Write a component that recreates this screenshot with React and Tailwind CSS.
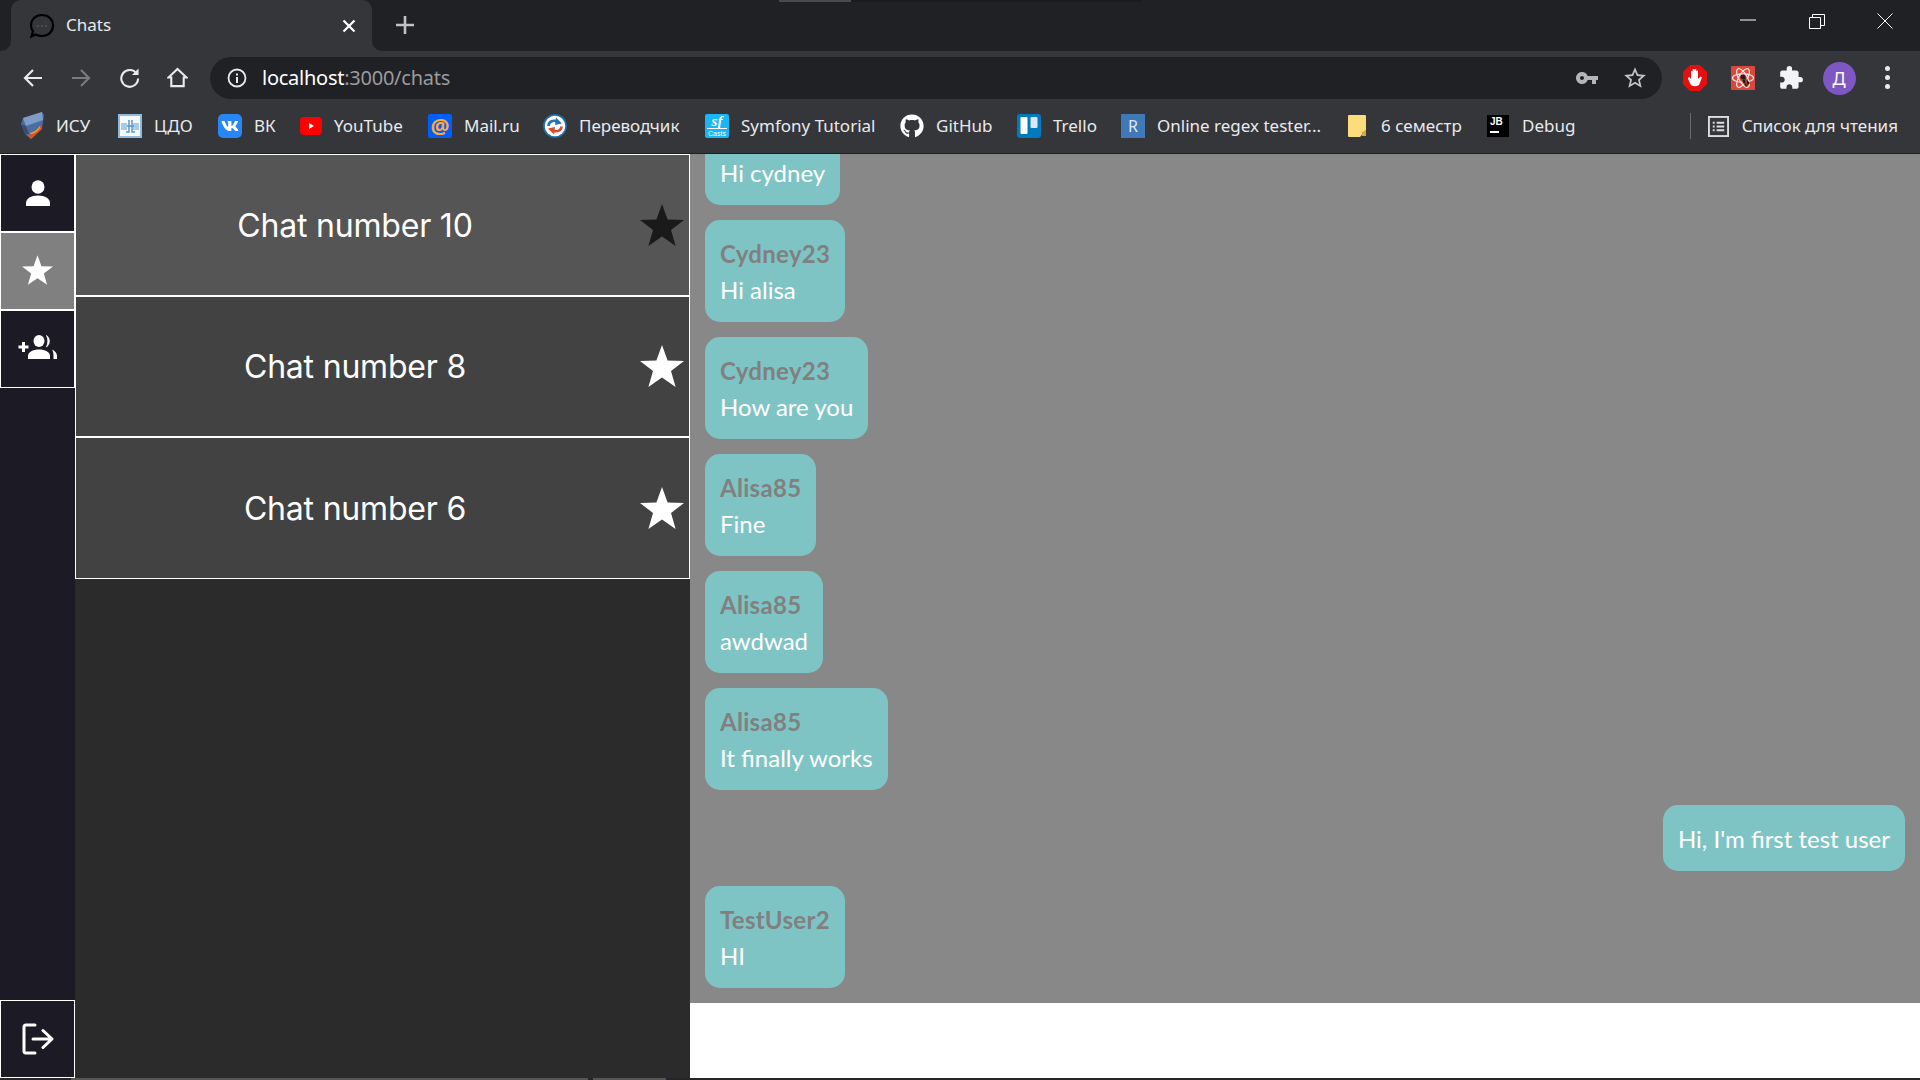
import React from "react";
import { FaGithub, FaVk } from "react-icons/fa";
import { MdVpnKey, MdStarBorder, MdExtension } from "react-icons/md";

const ui = "font-['Noto_Sans',sans-serif]";

const Star = ({ className }) => (
  <svg viewBox="0 0 44 42" className={className}>
    <polygon points="22,0 27.6,15.6 44,16 31,26 35.6,42 22,32.6 8.4,42 13,26 0,16 16.4,15.6" fill="currentColor" />
  </svg>
);

const IsuIcon = () => (
  <svg viewBox="0 0 24 28" className="w-6 h-7">
    <polygon points="3,6 22,0 24,3 22,17 11,27 5,22 1,12" fill="#4a6da3" />
    <polygon points="3,6 22,0 23,8 6,14" fill="#7f9cc8" />
    <polygon points="1,12 6,14 9,22 5,22" fill="#3d4c6e" />
    <path d="M7 23 C12 23 17 20 21 13 L22 17 L11 27 Z" fill="#e0501c" />
    <path d="M10 21 C14 20 17 18 20 14 L20 16 C17 20 14 22 10 22 Z" fill="#f5a02c" />
  </svg>
);
const CdoIcon = () => (
  <svg viewBox="0 0 24 24" className="w-6 h-6">
    <rect x="1" y="1" width="22" height="22" fill="#f5f9fc" stroke="#8fbbdc" strokeWidth="2" />
    <rect x="3" y="9" width="6" height="7" fill="#a9cce6" />
    <rect x="15" y="9" width="6" height="7" fill="#a9cce6" />
    <path d="M11 6 V18 H8 M14 6 V18 H17 M9 12 H16" fill="none" stroke="#5c97c6" strokeWidth="1.500" />
  </svg>
);
const VkIcon = () => (
  <span className="w-6 h-6 rounded-[5px] bg-[#2787f5] flex items-center justify-center text-white"><FaVk size={18} /></span>
);
const YtIcon = () => (
  <svg viewBox="0 0 22 18" className="w-[22px] h-[18px]">
    <rect width="22" height="18" rx="4" fill="#f00" />
    <polygon points="9,6 14,9 9,12" fill="#fff" />
  </svg>
);
const MailIcon = () => (
  <span className={`w-6 h-6 rounded-[2px] bg-[#005ff9] flex items-center justify-center text-[#ffa930] text-[21px] leading-none font-bold ${ui}`}>@</span>
);
const TranslateIcon = () => (
  <svg viewBox="0 0 24 24" className="w-6 h-6">
    <circle cx="12" cy="12" r="12" fill="#1f6ca8" />
    <circle cx="12" cy="12" r="10.300" fill="#fff" />
    <path d="M5.500 12 C5.500 8 9.500 5.500 14.500 7.500" fill="none" stroke="#2c72ad" strokeWidth="2.600" />
    <polygon points="13,3.500 19,9.500 12,11" fill="#2c72ad" />
    <path d="M18.500 12.500 C18.500 16 14.500 18.500 9.500 16.500" fill="none" stroke="#dd4a2e" strokeWidth="2.600" />
    <polygon points="11,20.500 5,14.500 12,13" fill="#dd4a2e" />
  </svg>
);
const SymfonyIcon = () => (
  <span className="w-6 h-6 rounded-[2px] bg-[#1ab5f5] flex flex-col items-center text-white overflow-hidden">
    <span className="font-['Liberation_Serif',serif] italic font-bold text-[15px] leading-[14px]">sf</span>
    <span className="w-5 h-px bg-white" />
    <span className="font-['Liberation_Sans',sans-serif] text-[7px] leading-[9px]">Casts</span>
  </span>
);
const GithubIcon = () => <span className="text-white"><FaGithub size={24} /></span>;
const TrelloIcon = () => (
  <svg viewBox="0 0 24 24" className="w-6 h-6">
    <rect width="24" height="24" rx="3" fill="#0079bf" />
    <rect x="3.500" y="3" width="7" height="17" rx="1" fill="#fff" />
    <rect x="13.500" y="3" width="7" height="11" rx="1" fill="#d9e8f2" />
  </svg>
);
const RegexIcon = () => (
  <span className="w-6 h-6 bg-[#4078b8] flex items-center justify-center text-[#dbe7f5] text-[16px] font-['Noto_Sans',sans-serif] leading-none">R</span>
);
const FolderIcon = () => (
  <svg viewBox="0 0 18 22" className="w-[18px] h-[22px]">
    <path d="M1 0 H17 a1 1 0 0 1 1 1 V15 L12 22 H1 a1 1 0 0 1 -1 -1 V1 a1 1 0 0 1 1 -1 Z" fill="#fddc7c" />
    <path d="M18 15 V21 H14 V17 Z" fill="#d4a93f" />
  </svg>
);
const JbIcon = () => (
  <span className="w-[22px] h-[22px] bg-black flex flex-col px-[3px] text-white text-[10px] font-bold leading-[13px] font-['Liberation_Sans',sans-serif]">
    <span>JB</span>
    <span className="mt-[3px] w-[9px] h-[2px] bg-white" />
  </span>
);

const bookmarks = [
  { icon: <IsuIcon />, box: "w-6", gap: "ml-[12px]", label: "ИСУ", w: "w-[35px]", next: "mr-[27px]" },
  { icon: <CdoIcon />, box: "w-6", gap: "ml-[12px]", label: "ЦДО", w: "w-[38px]", next: "mr-[26px]" },
  { icon: <VkIcon />, box: "w-6", gap: "ml-[12px]", label: "ВК", w: "w-[20px]", next: "mr-[26px]" },
  { icon: <YtIcon />, box: "w-[22px]", gap: "ml-[12px]", label: "YouTube", w: "w-[68px]", next: "mr-[26px]" },
  { icon: <MailIcon />, box: "w-6", gap: "ml-[12px]", label: "Mail.ru", w: "w-[54px]", next: "mr-[25px]" },
  { icon: <TranslateIcon />, box: "w-6", gap: "ml-[12px]", label: "Переводчик", w: "w-[101px]", next: "mr-[25px]" },
  { icon: <SymfonyIcon />, box: "w-6", gap: "ml-[12px]", label: "Symfony Tutorial", w: "w-[133px]", next: "mr-[26px]" },
  { icon: <GithubIcon />, box: "w-6", gap: "ml-[12px]", label: "GitHub", w: "w-[56px]", next: "mr-[25px]" },
  { icon: <TrelloIcon />, box: "w-6", gap: "ml-[12px]", label: "Trello", w: "w-[43px]", next: "mr-[25px]" },
  { icon: <RegexIcon />, box: "w-6", gap: "ml-[12px]", label: "Online regex tester...", w: "w-[164px]", next: "mr-[27px]" },
  { icon: <FolderIcon />, box: "w-[18px]", gap: "ml-[15px]", label: "6 семестр", w: "w-[80px]", next: "mr-[26px]" },
  { icon: <JbIcon />, box: "w-[22px]", gap: "ml-[13px]", label: "Debug", w: "w-[53px]", next: "" },
];

const messages = [
  { text: "Hi cydney" },
  { name: "Cydney23", text: "Hi alisa" },
  { name: "Cydney23", text: "How are you" },
  { name: "Alisa85", text: "Fine" },
  { name: "Alisa85", text: "awdwad" },
  { name: "Alisa85", text: "It finally works" },
  { text: "Hi, I'm first test user", mine: true },
  { name: "TestUser2", text: "HI" },
];

const chats = [
  { title: "Chat number 10", bg: "bg-[#555555]", star: "text-[#1a1a1a]" },
  { title: "Chat number 8", bg: "bg-[#424242]", star: "text-white" },
  { title: "Chat number 6", bg: "bg-[#424242]", star: "text-white" },
];

const NavBtn = ({ children }) => (
  <span className="w-12 h-full flex items-center justify-center shrink-0">{children}</span>
);
const stroke = { fill: "none", stroke: "currentColor", strokeWidth: 2.2 };

const SideBtn = ({ active, className = "", children }) => (
  <button className={`w-[75px] h-[78px] border-[1.5px] border-white flex items-center justify-center text-white ${active ? "bg-[#808080]" : "bg-[#1c1a25]"} ${className}`}>
    {children}
  </button>
);

export default function App() {
  return (
    <div className={`w-screen h-screen overflow-hidden flex flex-col bg-[#35363a] ${ui}`}>
      {/* tab strip */}
      <div className="h-[51px] shrink-0 bg-[#202124] flex relative">
        <div className="absolute left-[779px] top-0 w-[72px] h-[2px] bg-[#4a4a4c]" />
        <div className="absolute left-[851px] top-0 w-[291px] h-[2px] bg-[#1b1b1d]" />
        <div className="ml-[11px] w-[361px] h-full bg-[#35363a] rounded-t-[10px] flex items-center relative">
          <span className="absolute -left-[11px] bottom-0 w-[11px] h-[11px] bg-[#35363a]">
            <span className="block w-full h-full bg-[#202124] rounded-br-[10px]" />
          </span>
          <span className="absolute -right-[11px] bottom-0 w-[11px] h-[11px] bg-[#35363a]">
            <span className="block w-full h-full bg-[#202124] rounded-bl-[10px]" />
          </span>
          <svg viewBox="0 0 26 26" className="ml-[18px] w-[26px] h-[26px] text-black">
            <path d="M13 2 C19.500 2 24 6.500 24 12.500 C24 18.500 19.500 23 13 23 C10.500 23 8.500 22.500 6.500 21.500 L2.500 23.500 L4 18.500 C2.800 16.800 2 14.800 2 12.500 C2 6.500 6.500 2 13 2 Z" {...stroke} />
            <circle cx="9" cy="13" r="1.100" fill="#555" />
            <circle cx="13" cy="13" r="1.100" fill="#555" />
            <circle cx="17" cy="13" r="1.100" fill="#555" />
          </svg>
          <span className="ml-[11px] text-[17px] leading-none text-[#e8eaed] -mt-[2px]">Chats</span>
          <svg viewBox="0 0 14 14" className="absolute left-[331px] top-[19px] w-[14px] h-[14px] text-white">
            <path d="M1.500 1.500 L12.500 12.500 M12.500 1.500 L1.500 12.500" fill="none" stroke="currentColor" strokeWidth="2.200" />
          </svg>
        </div>
        <svg viewBox="0 0 18 18" className="ml-[24px] mt-[16px] w-[18px] h-[18px] text-[#c0c2c5]">
          <path d="M9 0 V18 M0 9 H18" fill="none" stroke="currentColor" strokeWidth="2.600" />
        </svg>
        <div className="ml-auto flex h-full text-white">
          <svg viewBox="0 0 16 16" className="absolute left-[1740px] top-[12px] w-4 h-4"><path d="M0 8 H16" stroke="currentColor" strokeWidth="1" /></svg>
          <svg viewBox="0 0 16 16" className="absolute left-[1809px] top-[13px] w-4 h-4"><path d="M0.500 4.500 H11.500 V15.500 H0.500 Z M3.500 4.500 V1.500 H15.500 V12.500 H11.500" fill="none" stroke="currentColor" strokeWidth="1" /></svg>
          <svg viewBox="0 0 16 16" className="absolute left-[1877px] top-[13px] w-4 h-4"><path d="M0.500 0.500 L15.500 15.500 M15.500 0.500 L0.500 15.500" fill="none" stroke="currentColor" strokeWidth="1" /></svg>
        </div>
      </div>

      {/* toolbar */}
      <div className="h-[48px] shrink-0 flex items-center pl-[9px] pr-[9px] pt-[6px] text-[#e8eaed]">
        <NavBtn>
          <svg viewBox="0 0 20 20" className="w-5 h-5"><path d="M19 10 H2 M10 2 L2 10 L10 18" {...stroke} /></svg>
        </NavBtn>
        <NavBtn>
          <svg viewBox="0 0 20 20" className="w-5 h-5 text-[#7a7b7e]"><path d="M1 10 H18 M10 2 L18 10 L10 18" {...stroke} /></svg>
        </NavBtn>
        <NavBtn>
          <svg viewBox="0 0 22 22" className="w-[21px] h-[21px] -mt-[2px]"><path d="M18.500 7 A8.800 8.800 0 1 0 20 12" {...stroke} /><polygon points="20.500,1.500 20.500,8.500 13.500,8.500" fill="currentColor" /></svg>
        </NavBtn>
        <NavBtn>
          <svg viewBox="0 0 22 22" className="w-[21px] h-[21px] -mt-[1px]"><path d="M11 2 L20.500 11 H17.500 V20 H4.500 V11 H1.500 Z" {...stroke} /></svg>
        </NavBtn>
        <div className="ml-[9px] flex-1 h-[42px] rounded-full bg-[#202124] flex items-center relative">
          <svg viewBox="0 0 20 20" className="ml-[17px] w-5 h-5">
            <circle cx="10" cy="10" r="8.500" fill="none" stroke="currentColor" strokeWidth="1.800" />
            <rect x="9" y="9" width="2" height="6" fill="currentColor" />
            <rect x="9" y="5.500" width="2" height="2" fill="currentColor" />
          </svg>
          <span className="ml-[15px] text-[20px] leading-none tracking-[-0.25px] whitespace-nowrap">
            <span className="text-white">localhost</span><span className="text-[#9a9b9e]">:3000/chats</span>
          </span>
          <span className="absolute left-[1365px] top-[9px] text-[#b4b5b8]"><MdVpnKey size={24} /></span>
          <span className="absolute left-[1412px] top-[8px] text-[#c3c4c7]"><MdStarBorder size={26} /></span>
        </div>
        <div className="ml-[9px] flex h-full items-center">
          <NavBtn>
            <svg viewBox="0 0 24 26" className="w-6 h-[26px]">
              <polygon points="7,0 17,0 24,7 24,19 17,26 7,26 0,19 0,7" fill="#e60f0f" />
              <path d="M8 20 C6.500 17 5.500 15 4.800 13 L6.300 12 L8 14 V6.500 Q8.800 5.200 9.600 6.500 V11 V4.500 Q10.500 3.300 11.400 4.500 V11 V4.500 Q12.400 3.300 13.300 4.500 V11 V6 Q14.200 4.800 15 6 V14 L17.500 11.500 L19 12.500 C17.500 15.500 17 18 16 20 Q12 22.500 8 20 Z" fill="#fff" />
            </svg>
          </NavBtn>
          <NavBtn>
            <svg viewBox="0 0 24 24" className="w-6 h-6">
              <rect width="24" height="24" rx="1" fill="#d9483c" />
              <ellipse cx="12" cy="12" rx="10.500" ry="4.200" fill="none" stroke="#f5e0dc" strokeWidth="1.200" />
              <ellipse cx="12" cy="12" rx="10.500" ry="4.200" fill="none" stroke="#f5e0dc" strokeWidth="1.200" transform="rotate(60 12 12)" />
              <ellipse cx="12" cy="12" rx="10.500" ry="4.200" fill="none" stroke="#f5e0dc" strokeWidth="1.200" transform="rotate(120 12 12)" />
              <circle cx="12" cy="11" r="2.500" fill="#2a1c1c" />
              <path d="M14 12 L19 17 L15 21 L11 15 Z" fill="#2a1c1c" />
              <path d="M14 13 L16.500 20 M17 13 L13 19" stroke="#d9483c" strokeWidth="0.800" />
            </svg>
          </NavBtn>
          <NavBtn>
            <span className="text-[#f1f3f4]"><MdExtension size={26} /></span>
          </NavBtn>
          <NavBtn>
            <span className="w-[33px] h-[33px] rounded-full bg-[#7e57c2] flex items-center justify-center text-[18px] leading-none text-white">Д</span>
          </NavBtn>
          <NavBtn>
            <span className="flex flex-col gap-[4px] -mt-[1px]">
              <span className="w-[5px] h-[5px] rounded-full bg-[#e8eaed]" />
              <span className="w-[5px] h-[5px] rounded-full bg-[#e8eaed]" />
              <span className="w-[5px] h-[5px] rounded-full bg-[#e8eaed]" />
            </span>
          </NavBtn>
        </div>
      </div>

      {/* bookmarks */}
      <div className="h-[54px] shrink-0 flex items-center pl-[20px] pr-[22px] text-[17px] text-[#e8eaed] whitespace-nowrap">
        {bookmarks.map((b) => (
          <div key={b.label} className={`flex items-center shrink-0 ${b.next}`}>
            <span className={`flex items-center justify-center shrink-0 ${b.box}`}>{b.icon}</span>
            <span className={`${b.gap} block ${b.w}`}>{b.label}</span>
          </div>
        ))}
        <div className="ml-auto flex items-center">
          <span className="w-px h-[26px] bg-[#6a6b6e]" />
          <svg viewBox="0 0 22 22" className="ml-[17px] w-[21px] h-[21px]">
            <rect x="1" y="1" width="20" height="20" fill="none" stroke="#dadce0" strokeWidth="2" />
            <path d="M5 7 H7 M9 7 H17 M5 11 H7 M9 11 H17 M5 15 H7 M9 15 H17" stroke="#dadce0" strokeWidth="2" />
          </svg>
          <span className="ml-[13px]">Список для чтения</span>
        </div>
      </div>
      <div className="h-px shrink-0 bg-[#1e1e20]" />

      {/* app */}
      <div className="flex-1 min-h-0 flex">
        <nav className="w-[75px] shrink-0 bg-[#1c1a25] flex flex-col">
          <SideBtn>
            <svg viewBox="0 0 26 26" className="w-[26px] h-[26px] -mt-[1px]">
              <ellipse cx="13" cy="7" rx="6.500" ry="6.800" fill="currentColor" />
              <path d="M1 26 V23 C1 18.500 6 15.500 13 15.500 C20 15.500 25 18.500 25 23 V26 Z" fill="currentColor" />
            </svg>
          </SideBtn>
          <SideBtn active>
            <span className="w-[31px] h-[30px] block -mt-[2px]"><Star className="w-full h-full" /></span>
          </SideBtn>
          <SideBtn>
            <svg viewBox="0 0 40 24" className="w-10 h-6 -mt-[5px]">
              <path d="M0.500 12 H10.500 M5.500 7 V17" fill="none" stroke="currentColor" strokeWidth="3" />
              <ellipse cx="21" cy="6" rx="5.500" ry="6" fill="currentColor" />
              <path d="M28.500 0.500 C32 2.500 32.500 9.500 28.500 11.800 C30.300 8.500 30.300 3.800 28.500 0.500 Z" fill="currentColor" stroke="currentColor" strokeWidth="0.800" />
              <path d="M10 24 V21 C10 17 15 14.500 21 14.500 C27 14.500 32 17 32 21 V24 Z" fill="currentColor" />
              <path d="M34 14.500 C37 16 39 18 39 21 V24 H35.500 V21 C35.500 18 35 16 34 14.500 Z" fill="currentColor" />
            </svg>
          </SideBtn>
          <SideBtn className="mt-auto">
            <svg viewBox="0 0 32 32" className="w-8 h-8">
              <path d="M13 2 H4 Q2 2 2 4 V28 Q2 30 4 30 H13" fill="none" stroke="currentColor" strokeWidth="3" strokeLinecap="round" />
              <path d="M11 16 H29 M21 7.500 L30 16 L21 24.500" fill="none" stroke="currentColor" strokeWidth="3" strokeLinecap="round" strokeLinejoin="round" />
            </svg>
          </SideBtn>
        </nav>

        <section className="w-[615px] shrink-0 bg-[#2b2b2b] flex flex-col">
          <div className="flex flex-col shrink-0">
            {chats.map((c) => (
              <div key={c.title} className={`h-[141.5px] flex items-center border border-white ${c.bg}`}>
                <span className="flex-1 text-center text-white text-[32px] leading-none font-['Inter',sans-serif] tracking-[-0.2px] mt-[2px]">{c.title}</span>
                <span className="w-[55px] flex justify-center shrink-0"><Star className={`w-11 h-[42px] ${c.star}`} /></span>
              </div>
            ))}
          </div>
        </section>

        <section className="flex-1 min-w-0 flex flex-col">
          <div className="h-[849px] shrink-0 bg-[#888888] overflow-hidden flex flex-col justify-end gap-[15px] px-[15px] pb-[15px] font-['Lato',sans-serif] text-[24px] leading-[36px] text-white">
            {messages.map((m, i) => (
              <div key={i} className={`shrink-0 rounded-[15px] bg-[#7fc4c4] px-[15px] pt-[16px] pb-[14px] ${m.mine ? "self-end" : "self-start"}`}>
                {m.name && <div className="font-bold tracking-[0.3px] text-[#808080]">{m.name}</div>}
                <div>{m.text}</div>
              </div>
            ))}
          </div>
          <div className="flex-1 bg-white" />
        </section>
      </div>

      {/* bottom scrollbar strip */}
      <div className="h-[2px] shrink-0 bg-[#26262a] flex pl-[71px]">
        <span className="w-[517px] h-full bg-[#555555]" />
        <span className="ml-[5px] w-[73px] h-full bg-[#555555]" />
      </div>
    </div>
  );
}
